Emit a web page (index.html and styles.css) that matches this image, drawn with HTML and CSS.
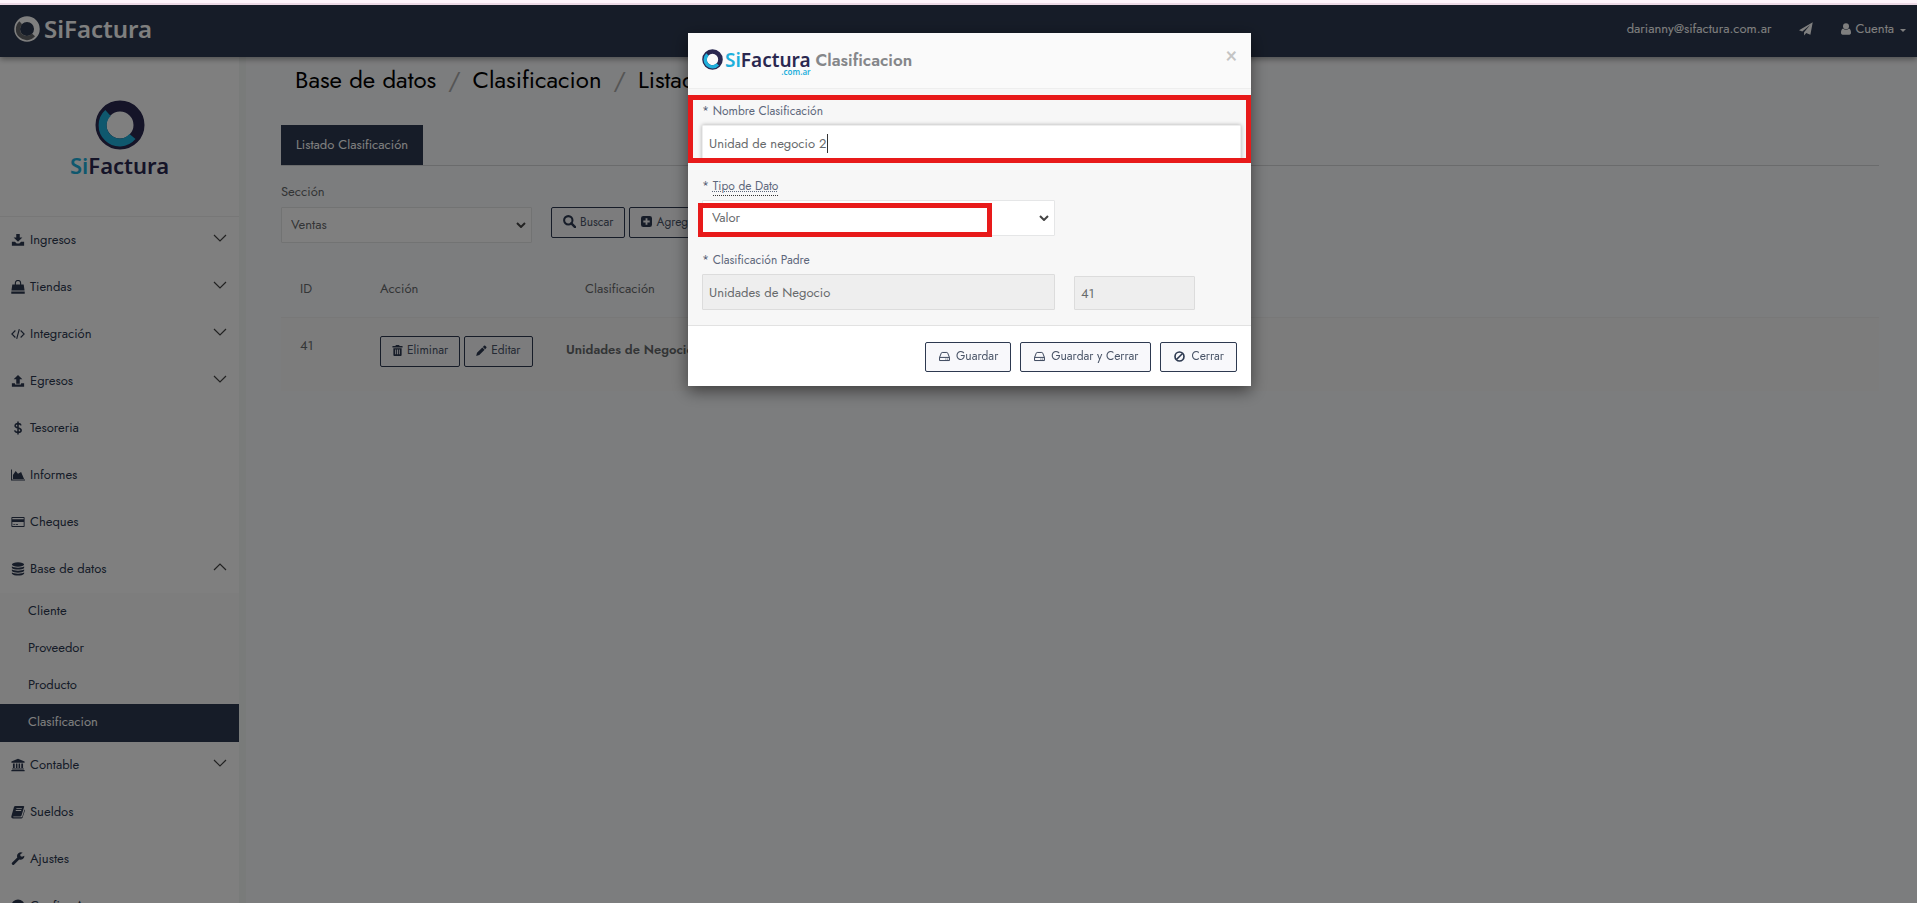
FILE: index.html
```html
<!DOCTYPE html>
<html lang="es">
<head>
    <meta charset="UTF-8">
    <meta name="viewport" content="width=device-width, initial-scale=1.0">
    <title>SiFactura - Clasificacion</title>
    <link rel="stylesheet" href="styles.css">
</head>
<body>
    <!-- Iconos -->
    <svg class="sprite" aria-hidden="true">
        <symbol id="i-ring" viewBox="0 0 50 50">
            <circle class="ring" cx="25" cy="25" r="19" fill="none" stroke-width="11"/>
            <path class="arc" d="M13 13A17 17 0 1 0 37.500 36.500" fill="none" stroke-width="8"/>
        </symbol>
        <symbol id="i-download" viewBox="0 0 16 16"><path d="M6 1h4v4h3L8 10 3 5h3zM1 10h3.500l2 2h3l2-2H15v4.500H1z"/></symbol>
        <symbol id="i-upload" viewBox="0 0 16 16"><path d="M8 1l5 5h-3v5H6V6H3zM1 10.500h3.500V12h7v-1.500H15v4H1z"/></symbol>
        <symbol id="i-bag" viewBox="0 0 16 16"><path d="M1.500 5h13l1 7H.5zM.3 13h15.400v2.700H.3z"/><path d="M5 7V3.500a3 3 0 0 1 6 0V7" fill="none" stroke="currentColor" stroke-width="1.300"/></symbol>
        <symbol id="i-code" viewBox="0 0 16 16"><path d="M5 4L1 8l4 4M11 4l4 4-4 4M9.500 2.500l-3 11" fill="none" stroke="currentColor" stroke-width="1.300"/></symbol>
        <symbol id="i-dollar" viewBox="0 0 16 16"><path d="M11.500 5C11 3.500 9.800 3 8 3 6 3 4.700 3.900 4.700 5.300 4.700 8.800 11.600 7 11.600 10.600 11.600 12.200 10.200 13 8 13s-3.400-.7-3.900-2.300M8 .5v15" fill="none" stroke="currentColor" stroke-width="1.800"/></symbol>
        <symbol id="i-chart" viewBox="0 0 18 16"><path d="M0 1h1.200v12.800H18V15H0zM2.500 13V8L6 3l3 3.500L13 4l3.800 9z"/></symbol>
        <symbol id="i-card" viewBox="0 0 18 16"><path d="M1.500 1.500h15a1 1 0 0 1 1 1v11a1 1 0 0 1-1 1h-15a1 1 0 0 1-1-1v-11a1 1 0 0 1 1-1zM1.700 3v1.500h14.600V3zM1.700 8v5.200h14.600V8zM3 11h2v1H3zM6 11h3v1H6z" fill-rule="evenodd"/></symbol>
        <symbol id="i-database" viewBox="0 0 16 16"><ellipse cx="8" cy="2.800" rx="7" ry="2.500"/><path d="M1 4.800c2 2.200 12 2.200 14 0v2c-2 2.500-12 2.500-14 0zM1 8.300c2 2.200 12 2.200 14 0v2c-2 2.500-12 2.500-14 0zM1 11.800c2 2.200 12 2.200 14 0v1.500c-2 3-12 3-14 0z"/></symbol>
        <symbol id="i-bank" viewBox="0 0 18 16"><path d="M9 0l8.500 3.500V5H.5V3.500zM2.500 6h2.300v6H2.500zM6.300 6h2v6h-2zM9.700 6h2v6h-2zM13.200 6h2.300v6h-2.300zM1.500 12.500h15v1.200h-15zM.5 14.300h17V16H.5z"/></symbol>
        <symbol id="i-book" viewBox="0 0 16 16"><path d="M5 1h9c1 0 1.300.6 1 1.400L12 12c-.3.700-.8 1-1.500 1H3c-.8 0-.8 1 0 1h8.500c.7 0 1.200-.3 1.500-1l2.500-8c.5.400.6.800.4 1.400l-2.600 7.800c-.3.800-.9 1.300-1.700 1.300H2.300C.8 15.500 0 14 .5 12.700L3.400 2.400C3.700 1.500 4.200 1 5 1zm1.300 2.400l-.3 1h6.200l.3-1zM5.600 5.800l-.3 1h6.200l.3-1z" fill-rule="evenodd"/></symbol>
        <symbol id="i-wrench" viewBox="0 0 16 16"><path d="M15.300 4.200a4.500 4.500 0 0 1-5.900 4.500l-5.700 5.700a1.600 1.600 0 0 1-2.300-2.300l5.800-5.700A4.500 4.500 0 0 1 13.400.8L10.700 2.500v2l1.800 1z"/></symbol>
        <symbol id="i-cog" viewBox="0 0 16 16"><circle cx="8" cy="8" r="5" fill="none" stroke="currentColor" stroke-width="5"/></symbol>
        <symbol id="i-chevron" viewBox="0 0 14 8"><path d="M1 1l6 6 6-6" fill="none" stroke="currentColor" stroke-width="1.200"/></symbol>
        <symbol id="i-plane" viewBox="0 0 16 16"><path d="M15.700.4L0 9.300l3.800 1.600 8.900-7.400-6.900 8.300V15.500l2.400-2.800 4.800 1.900z"/></symbol>
        <symbol id="i-user" viewBox="0 0 12 14"><circle cx="6" cy="3.700" r="3.600"/><path d="M2.500 6.500c2 1.900 5 1.900 7 0 1.700.3 2.500 2.500 2.500 5 0 1.300-.7 2.300-2 2.300H2c-1.300 0-2-1-2-2.300 0-2.500.8-4.700 2.500-5z"/></symbol>
        <symbol id="i-search" viewBox="0 0 14 14"><circle cx="5.700" cy="5.700" r="4.500" fill="none" stroke="currentColor" stroke-width="2.200"/><path d="M9 9l4 4" stroke="currentColor" stroke-width="2.600" stroke-linecap="round"/></symbol>
        <symbol id="i-plus" viewBox="0 0 12 12"><path d="M2.500 0h7A2.500 2.500 0 0 1 12 2.500v7A2.500 2.500 0 0 1 9.500 12h-7A2.500 2.500 0 0 1 0 9.500v-7A2.500 2.500 0 0 1 2.500 0zM5 2.500V5H2.500v2H5v2.500h2V7h2.500V5H7V2.500z" fill-rule="evenodd"/></symbol>
        <symbol id="i-trash" viewBox="0 0 12 12"><path d="M4 1.200V0h4v1.200h3.500v1.600H.5V1.200zM1.500 3.500h9V11q0 1-1 1h-7q-1 0-1-1zM3.500 5v5h1V5zM5.500 5v5h1V5zM7.500 5v5h1V5z" fill-rule="evenodd"/></symbol>
        <symbol id="i-pencil" viewBox="0 0 12 12"><path d="M8.700.9q.7-.7 1.400 0l1.100 1.100q.7.700 0 1.400L10 4.600 7.500 2.100zM6.900 2.700l2.500 2.500-5.800 5.800L.2 11.900l.9-3.400z"/></symbol>
        <symbol id="i-drive" viewBox="0 0 12 12"><path d="M.6 7L2.500 2.300q.2-.7 1-.7h5q.8 0 1 .7L11.400 7v3.400H.6zM.6 7h10.800M7 8.800h1M9 8.800h1" fill="none" stroke="currentColor" stroke-width="1"/></symbol>
        <symbol id="i-ban" viewBox="0 0 12 12"><circle cx="6" cy="6" r="4.900" fill="none" stroke="currentColor" stroke-width="1.800"/><path d="M9.300 2.700L2.700 9.300" stroke="currentColor" stroke-width="1.800"/></symbol>
    </svg>

    <header class="topbar">
        <a class="brand brand-light" href="#"><svg class="brand-ring"><use href="#i-ring"/></svg><span>SiFactura</span></a>
        <nav class="topnav">
            <a href="#">darianny@sifactura.com.ar</a>
            <a class="send" href="#" aria-label="Enviar"><svg class="icon"><use href="#i-plane"/></svg></a>
            <a class="account" href="#"><svg class="icon-user"><use href="#i-user"/></svg>Cuenta<i class="caret"></i></a>
        </nav>
    </header>

    <div class="layout">
        <aside class="sidebar">
            <div class="logo">
                <svg class="logo-ring"><use href="#i-ring"/></svg>
                <span class="logo-text"><b>Si</b>Factura</span>
            </div>
            <nav class="menu">
                <a href="#"><svg class="icon"><use href="#i-download"/></svg>Ingresos<svg class="chevron"><use href="#i-chevron"/></svg></a>
                <a href="#"><svg class="icon"><use href="#i-bag"/></svg>Tiendas<svg class="chevron"><use href="#i-chevron"/></svg></a>
                <a href="#"><svg class="icon"><use href="#i-code"/></svg>Integración<svg class="chevron"><use href="#i-chevron"/></svg></a>
                <a href="#"><svg class="icon"><use href="#i-upload"/></svg>Egresos<svg class="chevron"><use href="#i-chevron"/></svg></a>
                <a href="#"><svg class="icon"><use href="#i-dollar"/></svg>Tesoreria</a>
                <a href="#"><svg class="icon"><use href="#i-chart"/></svg>Informes</a>
                <a href="#"><svg class="icon"><use href="#i-card"/></svg>Cheques</a>
                <a href="#"><svg class="icon"><use href="#i-database"/></svg>Base de datos<svg class="chevron up"><use href="#i-chevron"/></svg></a>
                <div class="submenu">
                    <a href="#">Cliente</a>
                    <a href="#">Proveedor</a>
                    <a href="#">Producto</a>
                    <a class="active" href="#">Clasificacion</a>
                </div>
                <a href="#"><svg class="icon"><use href="#i-bank"/></svg>Contable<svg class="chevron"><use href="#i-chevron"/></svg></a>
                <a href="#"><svg class="icon"><use href="#i-book"/></svg>Sueldos</a>
                <a href="#"><svg class="icon"><use href="#i-wrench"/></svg>Ajustes</a>
                <a href="#"><svg class="icon"><use href="#i-cog"/></svg>Config. A</a>
            </nav>
        </aside>

        <main class="content">
            <ol class="breadcrumb">
                <li>Base de datos</li>
                <li>Clasificacion</li>
                <li>Listado</li>
            </ol>
            <div class="tabs"><a class="tab" href="#">Listado Clasificación</a></div>
            <div class="filters">
                <div class="filter">
                    <label for="seccion">Sección</label>
                    <select id="seccion" class="control select"><option>Ventas</option></select>
                </div>
                <div class="filter-buttons">
                    <button class="btn" type="button"><svg class="icon-btn"><use href="#i-search"/></svg>Buscar</button>
                    <button class="btn" type="button"><svg class="icon-small"><use href="#i-plus"/></svg>Agregar</button>
                </div>
            </div>
            <table class="grid">
                <thead>
                    <tr><th class="col-id">ID</th><th class="col-action">Acción</th><th class="col-name">Clasificación</th><th></th></tr>
                </thead>
                <tbody>
                    <tr>
                        <td>41</td>
                        <td>
                            <div class="actions">
                                <button class="btn" type="button"><svg class="icon-small"><use href="#i-trash"/></svg>Eliminar</button>
                                <button class="btn" type="button"><svg class="icon-small"><use href="#i-pencil"/></svg>Editar</button>
                            </div>
                        </td>
                        <td class="name">Unidades de Negocio</td>
                        <td></td>
                    </tr>
                </tbody>
            </table>
        </main>
    </div>

    <!-- Modal -->
    <div class="backdrop">
        <form class="modal" role="dialog" aria-labelledby="modalTitle">
            <div class="modal-header">
                <div class="brand">
                    <svg class="brand-ring"><use href="#i-ring"/></svg>
                    <span><b>Si</b>Factura<small>.com.ar</small></span>
                </div>
                <h4 id="modalTitle">Clasificacion</h4>
                <button class="close" type="button" aria-label="Cerrar ventana">×</button>
            </div>
            <div class="modal-body">
                <div class="field marked">
                    <label for="nombre">* Nombre Clasificación</label>
                    <input id="nombre" class="control focused" type="text" value="Unidad de negocio 2">
                </div>
                <div class="field">
                    <label for="tipo">* <abbr title="Tipo de Dato">Tipo de Dato</abbr></label>
                    <div class="select-wrap">
                        <select id="tipo" class="control select"><option>Valor</option></select>
                        <span class="mark"></span>
                    </div>
                </div>
                <div class="field">
                    <label for="padre">* Clasificación Padre</label>
                    <div class="row">
                        <input id="padre" class="control half" type="text" value="Unidades de Negocio" disabled>
                        <input class="control code" type="text" value="41" aria-label="ID padre" disabled>
                    </div>
                </div>
            </div>
            <div class="modal-footer">
                <button class="btn" type="button"><svg class="icon-small"><use href="#i-drive"/></svg>Guardar</button>
                <button class="btn" type="button"><svg class="icon-small"><use href="#i-drive"/></svg>Guardar y Cerrar</button>
                <button class="btn" type="button"><svg class="icon-small"><use href="#i-ban"/></svg>Cerrar</button>
            </div>
        </form>
    </div>
</body>
</html>
```
FILE: styles.css
```css
* {
    box-sizing: border-box;
}

body {
    --ring: #2a2850;
    --arc: #1fb0dc;
    margin: 0;
    height: 100vh;
    overflow: hidden;
    display: flex;
    flex-direction: column;
    font-family: Jost, Lato, sans-serif;
    font-size: 13px;
    line-height: 20px;
    color: #676a6c;
    background: #f9fafc;
    border-top: 3px solid #fdf3fa;
}

a {
    color: inherit;
    text-decoration: none;
}

svg {
    fill: currentColor;
    flex: none;
}

.sprite {
    position: absolute;
    width: 0;
    height: 0;
}

.icon {
    width: 14px;
    height: 14px;
}

.icon-btn {
    width: 13px;
    height: 13px;
}

.icon-small {
    width: 11px;
    height: 11px;
}

.ring {
    stroke: var(--ring);
}

.arc {
    stroke: var(--arc);
}

/* Barra superior */
.topbar {
    display: flex;
    flex: none;
    align-items: center;
    justify-content: space-between;
    height: 54px;
    padding: 0 11px 4px 14px;
    border-top: 2px solid #ecd9e5;
    background: #2d3950;
    color: #fff;
    box-shadow: 0 2px 6px rgba(0, 0, 0, 0.4);
    z-index: 1;
}

.brand {
    display: flex;
    align-items: center;
    gap: 4px;
    font-family: "Noto Sans", sans-serif;
    font-size: 24px;
    font-weight: 600;
}

.brand-ring {
    width: 26px;
    height: 26px;
}

.brand-light {
    --ring: #fff;
    --arc: #65676b;
}

.topnav {
    display: flex;
    align-items: center;
    gap: 28px;
}

.send {
    display: flex;
}

.account {
    display: flex;
    align-items: center;
    gap: 4px;
}

.icon-user {
    width: 10px;
    height: 12px;
}

.caret {
    margin: 2px 0 0 2px;
    border: 3px solid transparent;
    border-top-color: currentColor;
    border-bottom: 0;
}

.layout {
    display: flex;
    flex: 1;
    min-height: 0;
}

/* Menu lateral */
.sidebar {
    flex: none;
    width: 239px;
    background: #fff;
    color: #2d3950;
    overflow: hidden;
}

.logo {
    display: flex;
    flex-direction: column;
    align-items: center;
    height: 160px;
    padding-top: 43px;
    border-bottom: 1px solid #eee;
    color: var(--ring);
}

.logo-ring {
    width: 50px;
    height: 50px;
}

.logo-text {
    font: 600 22px/30px "Noto Sans", sans-serif;
}

.logo-text b,
.brand b {
    font-weight: 600;
    color: var(--arc);
}

.menu > a {
    display: flex;
    align-items: center;
    gap: 5px;
    height: 47px;
    padding: 0 12px 2px 11px;
}

.chevron {
    width: 14px;
    height: 8px;
    margin: 0 0 4px auto;
    color: #444;
}

.up {
    transform: rotate(180deg);
}

.submenu {
    background: #fbfbfb;
}

.submenu a {
    display: flex;
    align-items: center;
    height: 37px;
    padding: 0 28px 2px;
}

.submenu .active {
    height: 38px;
    background: #2d3950;
    color: #fff;
}

/* Contenido */
.content {
    flex: 1;
    min-width: 0;
    padding: 8px 38px 0 35px;
    border-left: 7px solid #f3f6f5;
}

.breadcrumb {
    display: flex;
    margin: 0 0 30px;
    padding: 0 0 0 14px;
    list-style: none;
    font-size: 24px;
    line-height: 30px;
    color: #000;
}

.breadcrumb li + li::before {
    content: "/";
    padding: 0 12px;
    color: #aaa;
}

.tabs {
    display: flex;
    border-bottom: 1px solid #d5d6d8;
}

.tab {
    padding: 10px 15px;
    background: #2d3950;
    color: #fff;
}

.filters {
    display: flex;
    align-items: flex-end;
    gap: 19px;
    padding-top: 16px;
}

.filter {
    width: 251px;
}

.filter label {
    display: block;
    margin-bottom: 5px;
}

.filter-buttons,
.actions {
    display: flex;
    gap: 4px;
}

.filter-buttons {
    padding-bottom: 5px;
}

.control {
    display: block;
    width: 100%;
    height: 36px;
    padding: 6px;
    border: 1px solid #e5e6e7;
    border-radius: 1px;
    background-color: #fff;
    color: #676a6c;
    font: inherit;
}

.select {
    appearance: none;
    padding-left: 9px;
    background-image: url("data:image/svg+xml,%3Csvg xmlns='http://www.w3.org/2000/svg' width='10' height='6'%3E%3Cpath d='M1 1l4 4 4-4' fill='none' stroke='%23444' stroke-width='2'/%3E%3C/svg%3E");
    background-repeat: no-repeat;
    background-position: right 5px center;
}

.btn {
    display: flex;
    align-items: center;
    gap: 4px;
    height: 31px;
    padding: 0 11px 2px;
    border: 1px solid #2d3950;
    border-radius: 2px;
    background: #f8f8fb;
    color: #4a5568;
    font: inherit;
    font-size: 12px;
}

.btn svg {
    color: #2d3950;
}

.grid {
    width: 100%;
    border-collapse: collapse;
    table-layout: fixed;
}

.grid th,
.grid td {
    height: 74px;
    padding: 18px 19px;
    text-align: left;
    vertical-align: top;
}

.grid th {
    vertical-align: bottom;
    font-weight: 400;
    border-bottom: 1px solid #f0f0f0;
}

.grid tbody {
    background: #f9f9f9;
}

.grid .col-id {
    width: 80px;
}

.grid .col-action {
    width: 205px;
}

.grid .col-name {
    width: 175px;
}

.grid .name {
    padding: 22px 0;
    font-weight: 600;
    white-space: nowrap;
}

/* Modal */
.backdrop {
    position: fixed;
    inset: 5px 0 0;
    z-index: 10;
    padding-left: 22px;
    background: rgba(0, 0, 0, 0.5);
}

.modal {
    width: 563px;
    margin: 28px auto 0;
    background: #fff;
    box-shadow: 0 5px 15px rgba(0, 0, 0, 0.5);
}

.modal-header {
    display: flex;
    align-items: center;
    gap: 5px;
    height: 56px;
    padding: 0 14px 2px;
    border-bottom: 1px solid #eee;
    background: #fafafa;
}

.modal-header .brand {
    gap: 2px;
    font-size: 19px;
    color: var(--ring);
}

.modal-header .brand-ring {
    width: 21px;
    height: 21px;
}

.brand span {
    position: relative;
}

.brand small {
    position: absolute;
    right: 0;
    top: 17px;
    font-size: 8px;
    line-height: 10px;
    color: var(--arc);
}

.modal-header h4 {
    margin: 0;
    font-size: 17px;
    font-weight: 600;
    color: #85878a;
}

.close {
    align-self: flex-start;
    margin: 12px 0 0 auto;
    padding: 0;
    border: 0;
    background: none;
    color: #c4c4c4;
    font: 700 20px/20px Lato, sans-serif;
}

.modal-body {
    padding: 6px 0 1px;
    background: #f7f7f7;
    border-bottom: 1px solid #e2e2e2;
}

.field {
    padding: 0 14px;
    margin-bottom: 14px;
}

.field label {
    display: block;
    margin-bottom: 4px;
    font-size: 12px;
    color: #5d677b;
}

.field abbr {
    text-decoration: underline dotted;
    border-bottom: 1px dotted #333;
}

.marked {
    height: 68px;
    margin-bottom: 13px;
    padding: 1px 5px 0 9px;
    border: 5px solid #e81a1a;
    overflow: hidden;
}

/* Campo activo con el cursor al final del texto */
.focused {
    outline: 0;
    border-color: #eee;
    box-shadow: 0 0 4px rgba(0, 0, 0, 0.3);
    background-image: linear-gradient(#333, #333);
    background-repeat: no-repeat;
    background-size: 1px 19px;
    background-position: 124px 8px;
}

.select-wrap {
    position: relative;
    width: 353px;
}

.mark {
    position: absolute;
    inset: 3px 63px -1px -4px;
    border: 5px solid #e81a1a;
    pointer-events: none;
}

.row {
    display: flex;
    align-items: flex-end;
    gap: 19px;
}

.half {
    width: 353px;
}

.code {
    width: 121px;
    height: 34px;
}

.control:disabled {
    background: #eee;
    border-color: #dcdcdc;
}

.modal-footer {
    display: flex;
    justify-content: flex-end;
    gap: 9px;
    padding: 16px 14px 14px;
}

.modal-footer .btn {
    gap: 6px;
    height: 30px;
    padding: 0 12px 2px 13px;
}
```
